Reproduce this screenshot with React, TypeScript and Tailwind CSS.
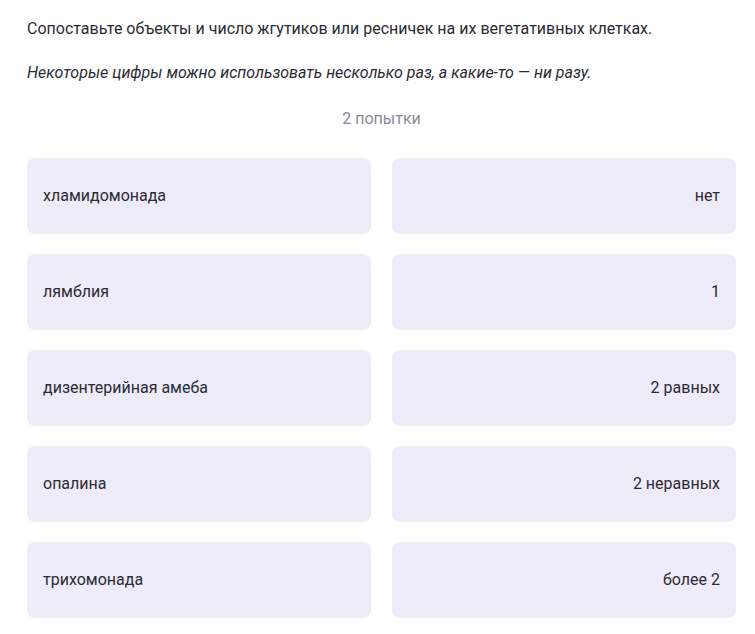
const rows: [string, string][] = [
  ['хламидомонада', 'нет'],
  ['лямблия', '1'],
  ['дизентерийная амеба', '2 равных'],
  ['опалина', '2 неравных'],
  ['трихомонада', 'более 2'],
];

export default function App() {
  return (
    <main className="min-h-screen bg-white font-['Roboto',sans-serif] text-[#2b2b33]">
      <div className="pl-[27px] pr-[19px] pt-[17px]">
        <p className="text-base leading-6">
          Сопоставьте объекты и число жгутиков или ресничек на их вегетативных клетках.
        </p>
        <p className="mt-5 text-base leading-6 italic">
          Некоторые цифры можно использовать несколько раз, а какие-то — ни разу.
        </p>
        <p className="mt-[22px] text-center text-base leading-6 text-[#8b8a96]">2 попытки</p>

        {/* pairs */}
        <div className="mt-[27px] grid grid-cols-2 gap-x-[21px] gap-y-[20px]">
          {rows.map(([left, right]) => (
            <>
              <div key={left} className="flex h-[76px] items-center rounded-lg bg-[#efecf9] px-4 text-base">
                {left}
              </div>
              <div key={right} className="flex h-[76px] items-center justify-end rounded-lg bg-[#efecf9] px-4 text-base">
                {right}
              </div>
            </>
          ))}
        </div>
      </div>
    </main>
  );
}
